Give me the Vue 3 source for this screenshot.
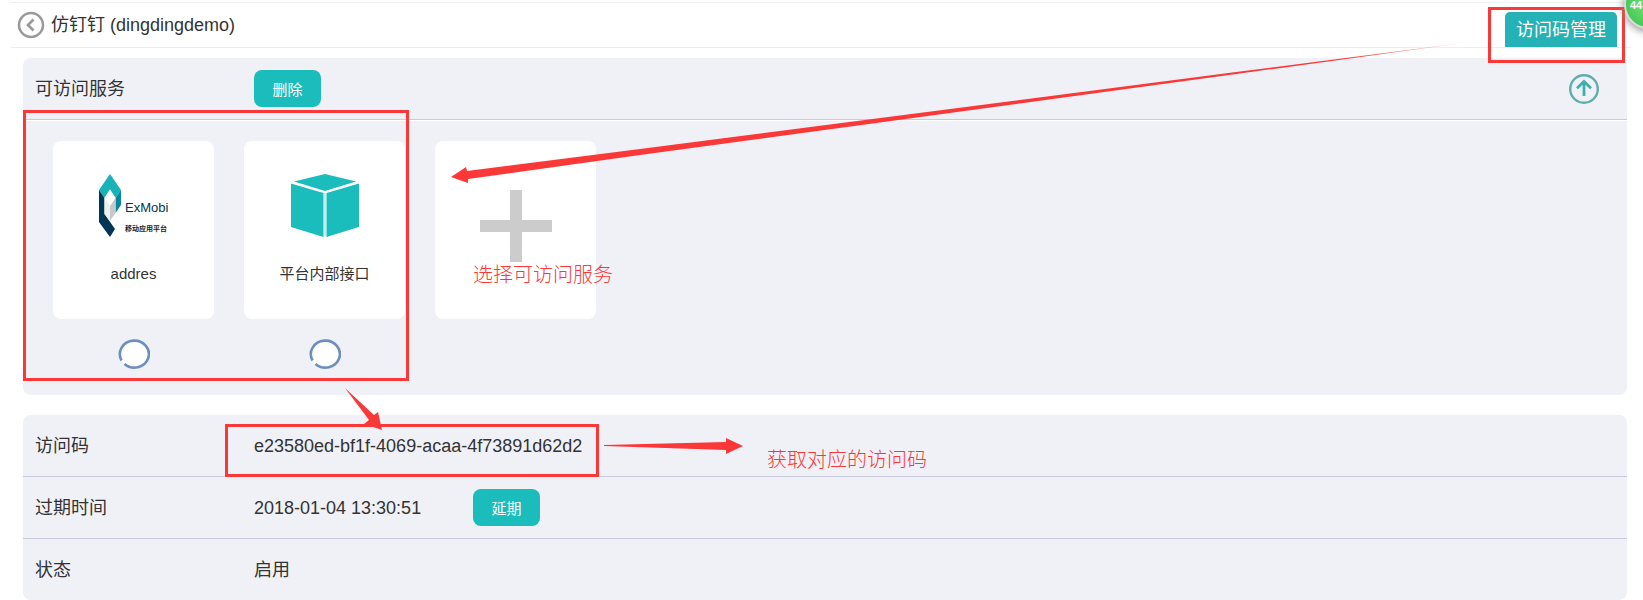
<script setup>
import { ref } from 'vue'

const services = [
  { id: 'addres', name: 'addres', icon: 'exmobi' },
  { id: 'platform', name: '平台内部接口', icon: 'cube' },
]
const selected = ref([])
</script>

<template>
  <div class="page">
    <header class="topbar">
      <button class="icon-button" type="button" aria-label="返回">
        <svg width="28" height="28" viewBox="0 0 28 28" fill="none" stroke="#999">
          <circle cx="14" cy="14" r="12" stroke-width="2.500" />
          <path d="M16.500 8.500L11 14L16.500 19.500" stroke-width="2.600" />
        </svg>
      </button>
      <h1 class="title">仿钉钉 (dingdingdemo)</h1>
      <div class="tab-wrap">
        <button class="tab" type="button">访问码管理</button>
        <span class="mark mark-tab"></span>
      </div>
    </header>

    <main class="content">
      <section class="panel">
        <div class="row row-head">
          <h2 class="label">可访问服务</h2>
          <button class="btn" type="button">删除</button>
          <button class="icon-button collapse" type="button" aria-label="收起">
            <svg width="30" height="30" viewBox="0 0 30 30" fill="none" stroke="#5fadab">
              <circle cx="15" cy="15" r="13.800" stroke-width="2.400" />
              <path d="M15 22V7.500M8 14.200L15 7.500L22 14.200" stroke="#3eafac" stroke-width="2.800" />
            </svg>
          </button>
        </div>

        <div class="services">
          <div v-for="s in services" :key="s.id" class="service">
            <div class="card">
              <svg v-if="s.icon === 'exmobi'" class="logo" width="70" height="63" viewBox="0 0 70 63">
                <path d="M11 0L22 16L16.500 24L11 15.500L5.500 24L0 16Z" fill="#18b3b8" />
                <path d="M0 16L5.500 24V40L16 55L11 63L0 48Z" fill="#003654" />
                <path d="M22 16L16.500 24V39L22 31Z" fill="#0787a0" />
                <path d="M5.500 23L11 31V47L5.500 40Z" fill="#efefef" />
                <path d="M16.500 23L11 31V47L16.500 39Z" fill="#c7c8ca" />
                <path d="M11 15.500L16.500 24L11 32L5.500 24Z" fill="#fff" />
                <text class="logo-name" x="26" y="38">ExMobi</text>
                <text class="logo-sub" x="26" y="57">移动应用平台</text>
              </svg>
              <svg v-else class="logo" width="68" height="63" viewBox="0 0 68 63" fill="#1bbcbc">
                <path d="M34 0L65 7.500L34 17L3 7.500Z" />
                <path d="M0 9.500L32.500 19V63L0 53Z" />
                <path d="M68 9.500L35.500 19V63L68 53Z" />
                <path d="M34 19V62" stroke="#c4eeee" stroke-width="2" />
              </svg>
              <span class="name">{{ s.name }}</span>
            </div>
            <label class="pick">
              <input v-model="selected" type="checkbox" :value="s.id" :aria-label="s.name" />
              <svg width="32" height="30" viewBox="0 0 32 30">
                <ellipse cx="16" cy="15" rx="14.500" ry="13.500" fill="#fff" />
                <path
                  d="M3.600 21.500A14.500 13.500 0 1 1 6.500 25"
                  fill="none" stroke="#6d8fbf" stroke-width="2.600"
                />
                <circle v-if="selected.includes(s.id)" cx="16" cy="15" r="7" fill="#6d8fbf" />
              </svg>
            </label>
          </div>
          <button class="card add" type="button" aria-label="选择可访问服务">
            <svg width="72" height="72" viewBox="0 0 72 72" fill="#ccc">
              <path d="M30 0H42V30H72V42H42V72H30V42H0V30H30Z" />
            </svg>
          </button>
        </div>
      </section>

      <section class="panel">
        <div class="row">
          <span class="label">访问码</span>
          <span>e23580ed-bf1f-4069-acaa-4f73891d62d2</span>
        </div>
        <div class="row">
          <span class="label">过期时间</span>
          <span class="value">2018-01-04 13:30:51</span>
          <button class="btn" type="button">延期</button>
        </div>
        <div class="row">
          <span class="label">状态</span>
          <span>启用</span>
        </div>
      </section>
    </main>

    <div class="overlay">
      <span class="mark mark-services"></span>
      <span class="mark mark-code"></span>
      <svg class="arrow arrow-long" viewBox="451 40 1019 145" preserveAspectRatio="none">
        <defs>
          <linearGradient id="fade">
            <stop offset="0.880" stop-color="#fb3838" />
            <stop offset="1" stop-color="#fb3838" stop-opacity="0.200" />
          </linearGradient>
        </defs>
        <path
          d="M451 177L466 167L467 171L640 149L1240 71.500L1470 42L1240 73.500L640 155L468 179V183Z"
          fill="url(#fade)"
        />
      </svg>
      <svg class="arrow arrow-down" width="40" height="44" viewBox="345 388 40 44">
        <path d="M345 388L374 415L378 412L382 430L364 424L369 420Z" fill="#fb3838" />
      </svg>
      <svg class="arrow arrow-right" width="140" height="18" viewBox="604 437 140 18">
        <path d="M604 445L726 442V438L743 446L726 454V450L604 446Z" fill="#fb3838" />
      </svg>
      <span class="note note-services">选择可访问服务</span>
      <span class="note note-code">获取对应的访问码</span>
      <span class="badge">44</span>
    </div>
  </div>
</template>

<style>
body {
  margin: 0;
  background: #fff;
}
</style>

<style scoped>
.page {
  position: relative;
  overflow: hidden;
  padding-top: 2px;
  color: #333;
  font-family: "Liberation Sans", "Noto Sans CJK SC", sans-serif;
  font-size: 18px;
  line-height: 24px;
}
button {
  padding: 0;
  border: 0;
  font-family: inherit;
  cursor: pointer;
}
svg {
  display: block;
}
.topbar {
  display: flex;
  align-items: center;
  box-sizing: border-box;
  height: 46px;
  margin: 0 12px 0 11px;
  padding: 0 14px 0 6px;
  border-top: 1px solid #eee;
  border-bottom: 1px solid #eee;
}
.icon-button {
  background: none;
}
.title {
  margin: 0 0 0 6px;
  font-size: 18px;
  font-weight: 400;
}
.tab-wrap {
  position: relative;
  align-self: flex-end;
  margin-left: auto;
}
.tab {
  display: block;
  width: 112px;
  height: 35px;
  padding-bottom: 3px;
  border-radius: 5px 5px 0 0;
  background: #24b2b6;
  color: #fff;
  font-size: 18px;
}
.content {
  display: flex;
  flex-direction: column;
  gap: 20px;
  margin: 10px 16px 0 23px;
}
.panel {
  border-radius: 8px;
  background: #f0f1f7;
}
.row {
  display: flex;
  align-items: center;
  height: 61px;
  padding: 0 28px 0 12px;
  border-bottom: 1px solid #c8c9dc;
}
.row:last-child {
  border-bottom: 0;
}
.row-head {
  box-shadow: 0 1px 0 #fff;
}
.label,
.value {
  flex: none;
  width: 219px;
  margin: 0;
  font-size: 18px;
  font-weight: 400;
}
.btn {
  width: 67px;
  height: 37px;
  border-radius: 8px;
  background: #1bbcbc;
  color: #fff;
  font-size: 15px;
}
.collapse {
  margin-left: auto;
}
.services {
  display: flex;
  align-items: flex-start;
  gap: 30px;
  padding: 21px 30px 26px;
}
.service {
  display: flex;
  flex-direction: column;
  align-items: center;
  gap: 20px;
}
.card {
  display: flex;
  flex-direction: column;
  align-items: center;
  box-sizing: border-box;
  width: 161px;
  height: 178px;
  padding-top: 33px;
  border-radius: 8px;
  background: #fff;
}
.add {
  padding-top: 49px;
}
.name {
  margin-top: 25px;
  font-size: 15px;
}
.logo-name {
  fill: #003654;
  font-size: 13px;
}
.logo-sub {
  fill: #222;
  font-size: 7px;
  font-weight: 700;
}
.pick {
  position: relative;
  cursor: pointer;
}
.pick input {
  position: absolute;
  inset: 0;
  width: 100%;
  height: 100%;
  margin: 0;
  opacity: 0;
  cursor: pointer;
}
.overlay {
  position: absolute;
  inset: 0;
  pointer-events: none;
}
.mark {
  position: absolute;
  box-sizing: border-box;
  border: 3px solid #fb3838;
  pointer-events: none;
}
.mark-tab {
  inset: -5px -8px -16px -17px;
}
.mark-services {
  left: 23px;
  top: 110px;
  width: 386px;
  height: 271px;
}
.mark-code {
  left: 225px;
  top: 424px;
  width: 374px;
  height: 53px;
}
.arrow {
  position: absolute;
}
.arrow-long {
  left: 451px;
  top: 40px;
  width: calc(100% - 624px);
  height: 145px;
}
.arrow-down {
  left: 345px;
  top: 388px;
}
.arrow-right {
  left: 604px;
  top: 437px;
}
.note {
  position: absolute;
  color: #fb3838;
  font-size: 20px;
  font-weight: 300;
  white-space: nowrap;
}
.note-services {
  left: 473px;
  top: 263px;
}
.note-code {
  left: 767px;
  top: 448px;
}
.badge {
  position: absolute;
  top: -20px;
  right: -30px;
  box-sizing: border-box;
  width: 49px;
  height: 49px;
  padding: 13px 0 0 4px;
  border: 2px solid #d5d8d5;
  border-radius: 50%;
  background: radial-gradient(circle, #7be07b 0, #3fc652 80%, #239c3c 100%);
  box-shadow: 0 2px 8px #888;
  color: #fff;
  font-size: 11px;
  font-weight: 700;
  line-height: 20px;
}
</style>
